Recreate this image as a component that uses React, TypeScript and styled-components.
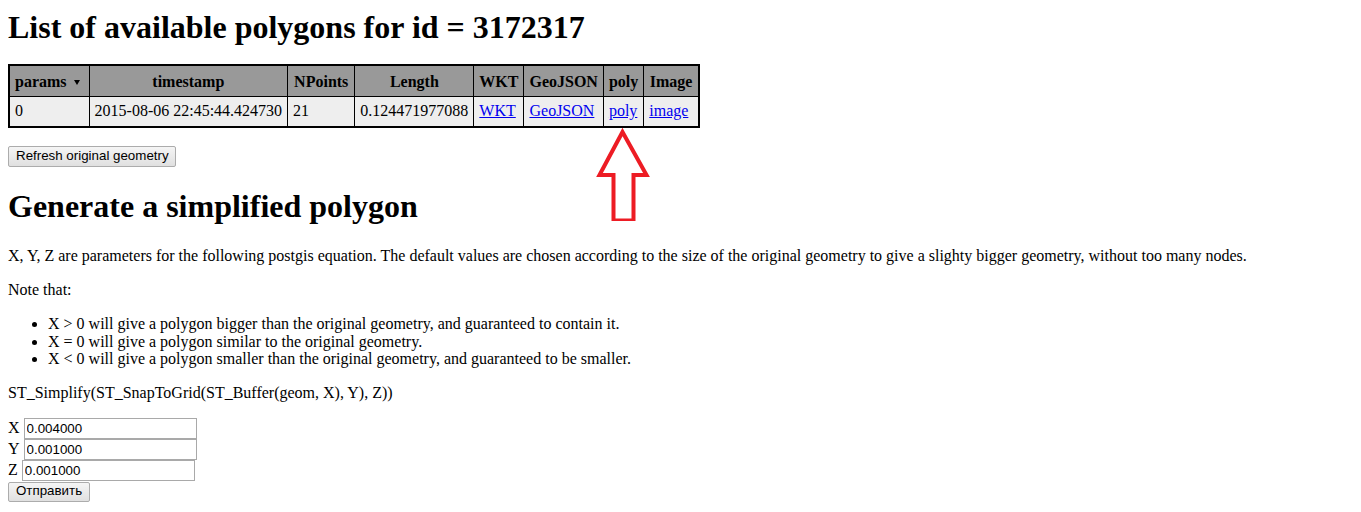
import React from "react";
import styled, { createGlobalStyle } from "styled-components";

const Global = createGlobalStyle`
  html, body { background: #fff; }
  body {
    margin: 8px;
    font-family: "Liberation Serif", "Times New Roman", serif;
    font-size: 16px;
    color: #000;
  }
`;

const Page = styled.div`
  position: relative;
`;

const Title = styled.h1`
  font-size: 32px;
  font-weight: bold;
  margin: 1px 0 18px;
`;

const SubTitle = styled.h2`
  font-size: 32px;
  font-weight: bold;
  margin: 21px 0 22px;
`;

const Table = styled.table`
  border-collapse: collapse;
  border: 2px solid #000;
`;

const Th = styled.th<{ $left?: boolean; $extra?: number }>`
  background: #999999;
  border: 1px solid #000;
  padding: 7px ${(p) => 5 + (p.$extra ?? 0)}px 5px;
  font-weight: bold;
  text-align: ${(p) => (p.$left ? "left" : "center")};
  white-space: nowrap;
`;

const Td = styled.td`
  background: #eeeeee;
  border: 1px solid #000;
  padding: 5px 5px 6px;
  white-space: nowrap;
`;

const SortHead = styled.div`
  display: flex;
  align-items: center;
  padding-right: 4px;
`;

const Caret = styled.svg`
  margin-left: 7px;
  width: 6px;
  height: 5px;
`;

const Link = styled.a`
  color: #0000ee;
  text-decoration: underline;
`;

const Button = styled.button`
  font-family: Arial, "Liberation Sans", sans-serif;
  font-size: 13.33px;
  color: #000;
  background: linear-gradient(#f5f5f5, #e0e0e0);
  border: 1px solid #acacac;
  border-radius: 2px;
  padding: 1px 6px 2px 7px;
  height: 21px;
  line-height: 16px;
`;

const RefreshForm = styled.form`
  margin: 18px 0 0;
`;

const Para = styled.p`
  margin: 16px 0;
`;

const List = styled.ul`
  margin: 16px 0;
  padding-left: 40px;
  line-height: 17.6px;
`;

const ParamForm = styled.form`
  margin-top: 16px;
  display: flex;
  flex-direction: column;
  align-items: flex-start;
`;

const Row = styled.div`
  display: flex;
  align-items: center;
  height: 21px;
`;

const Label = styled.span`
  margin-right: 4px;
`;

const Input = styled.input`
  font-family: Arial, "Liberation Sans", sans-serif;
  font-size: 13.33px;
  width: 173px;
  height: 21px;
  box-sizing: border-box;
  border: 1px solid #a9a9a9;
  padding: 1px 2px;
  color: #000;
  background: #fff;
`;

const SubmitButton = styled(Button)`
  margin-top: 1px;
  height: 20px;
  padding: 0 7px 1px;
`;

const Arrow = styled.svg`
  position: absolute;
  left: 588px;
  top: 112px;
  width: 54px;
  height: 100px;
`;

const headers: { h: string; extra?: number }[] = [
  { h: "timestamp" },
  { h: "NPoints", extra: 1 },
  { h: "Length" },
  { h: "WKT" },
  { h: "GeoJSON" },
  { h: "poly" },
  { h: "Image", extra: 0.5 },
];

export default function App() {
  return (
    <Page>
      <Global />
      <Title>List of available polygons for id = 3172317</Title>
      <Table>
        <thead>
          <tr>
            <Th $left>
              <SortHead>
                params
                <Caret viewBox="0 0 6 5">
                  <polygon points="0,0 6,0 3,5" fill="#000" />
                </Caret>
              </SortHead>
            </Th>
            {headers.map(({ h, extra }) => (
              <Th key={h} $extra={extra}>
                {h}
              </Th>
            ))}
          </tr>
        </thead>
        <tbody>
          <tr>
            <Td>0</Td>
            <Td>2015-08-06 22:45:44.424730</Td>
            <Td>21</Td>
            <Td>0.124471977088</Td>
            <Td>
              <Link href="#">WKT</Link>
            </Td>
            <Td>
              <Link href="#">GeoJSON</Link>
            </Td>
            <Td>
              <Link href="#">poly</Link>
            </Td>
            <Td>
              <Link href="#">image</Link>
            </Td>
          </tr>
        </tbody>
      </Table>
      <RefreshForm onSubmit={(e) => e.preventDefault()}>
        <Button type="button">Refresh original geometry</Button>
      </RefreshForm>
      <Arrow viewBox="596 120 54 100">
        <polygon
          points="622.5,131 646.5,174 633.5,174 633.5,219.5 613.5,219.5 613.5,174 599.5,174"
          fill="none"
          stroke="#ed1c24"
          strokeWidth="4"
          strokeLinejoin="miter"
        />
      </Arrow>
      <SubTitle>Generate a simplified polygon</SubTitle>
      <Para>
        X, Y, Z are parameters for the following postgis equation. The default values are chosen
        according to the size of the original geometry to give a slighty bigger geometry, without
        too many nodes.
      </Para>
      <Para>Note that:</Para>
      <List>
        <li>X &gt; 0 will give a polygon bigger than the original geometry, and guaranteed to contain it.</li>
        <li>X = 0 will give a polygon similar to the original geometry.</li>
        <li>X &lt; 0 will give a polygon smaller than the original geometry, and guaranteed to be smaller.</li>
      </List>
      <Para>ST_Simplify(ST_SnapToGrid(ST_Buffer(geom, X), Y), Z))</Para>
      <ParamForm onSubmit={(e) => e.preventDefault()}>
        <Row>
          <Label>X</Label>
          <Input defaultValue="0.004000" />
        </Row>
        <Row>
          <Label>Y</Label>
          <Input defaultValue="0.001000" />
        </Row>
        <Row>
          <Label>Z</Label>
          <Input defaultValue="0.001000" />
        </Row>
        <SubmitButton type="button">Отправить</SubmitButton>
      </ParamForm>
    </Page>
  );
}
